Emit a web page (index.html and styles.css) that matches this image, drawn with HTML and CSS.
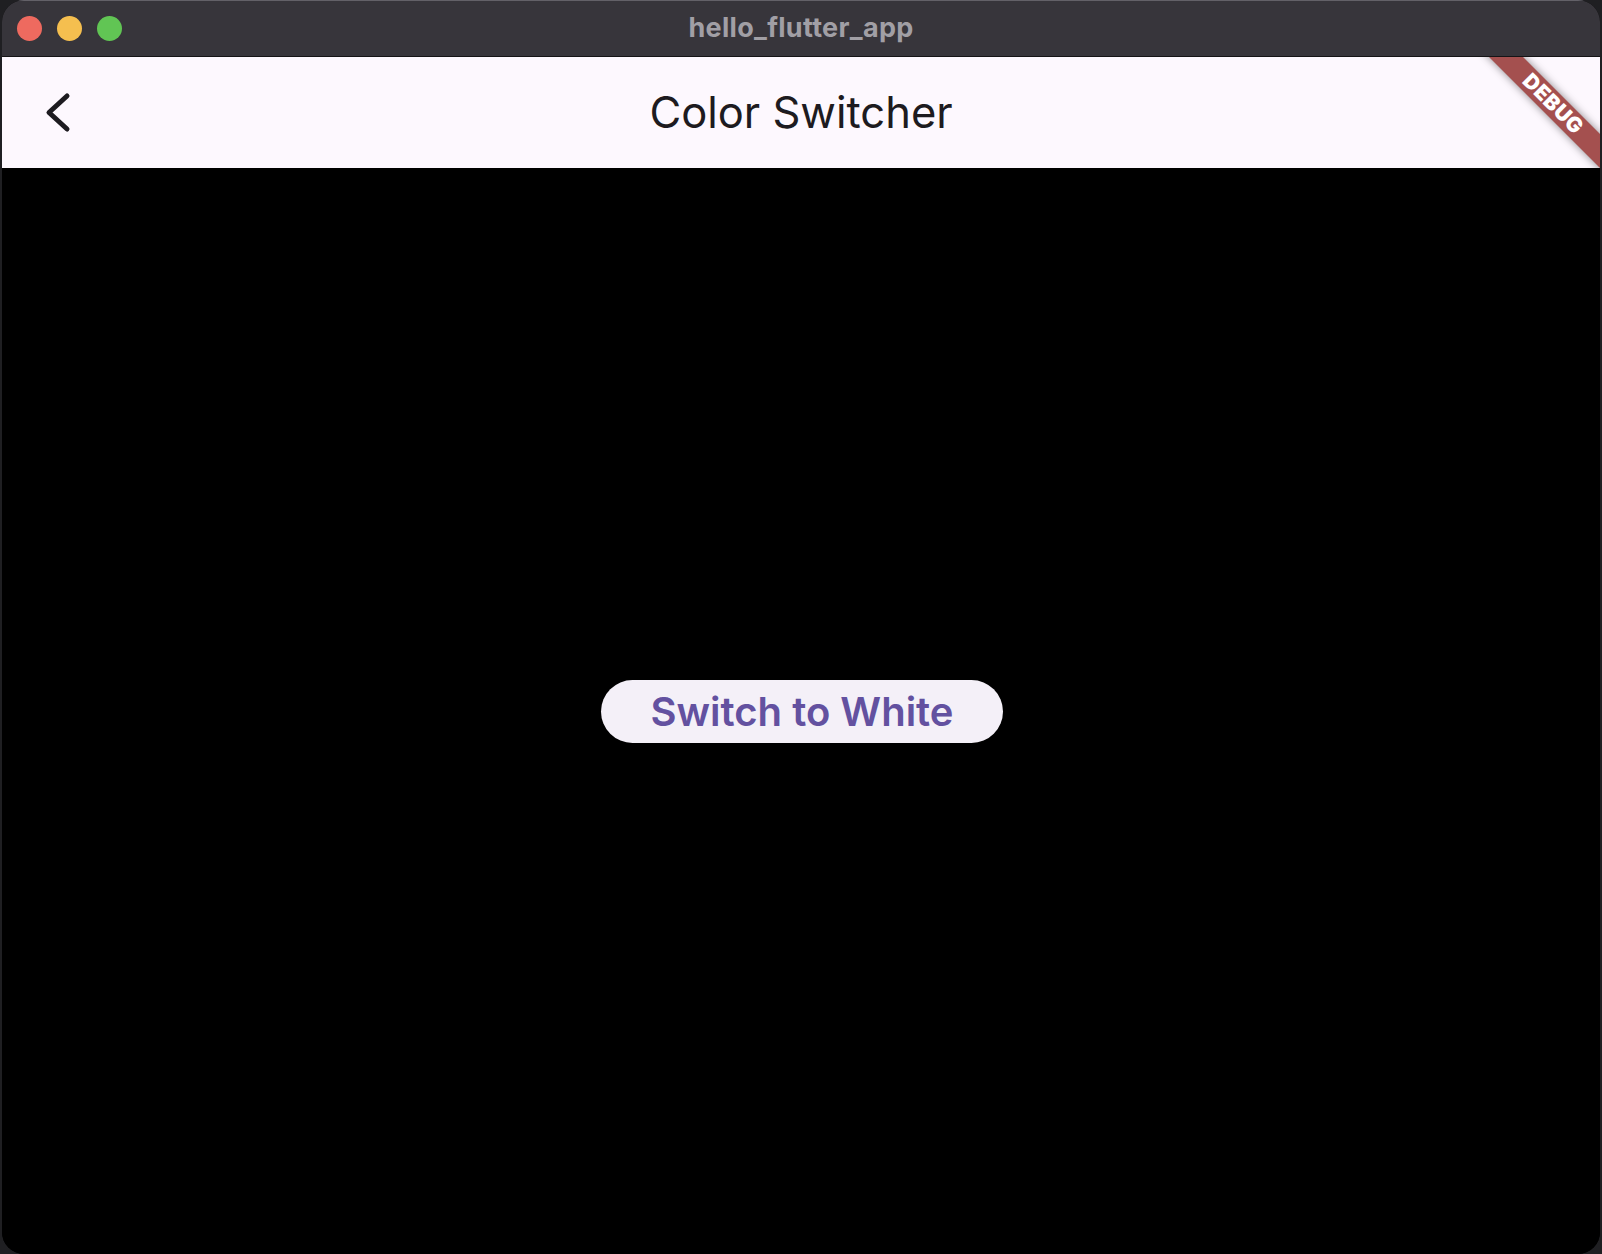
FILE: index.html
```html
<!DOCTYPE html>
<html>
<head>
<meta charset="utf-8">
<title>hello_flutter_app</title>
<link rel="stylesheet" href="styles.css">
</head>
<body>
<div class="window">
  <div class="titlebar">
    <div class="lights">
      <span class="light red"></span>
      <span class="light yellow"></span>
      <span class="light green"></span>
    </div>
    <div class="wintitle">hello_flutter_app</div>
    <div class="lights-spacer"></div>
  </div>
  <div class="app">
    <div class="appbar">
      <div class="leading">
        <svg class="back" width="30" height="44" viewBox="0 0 30 44">
          <polyline points="24,6 6,22.5 24,39" fill="none" stroke="#1d1b20" stroke-width="5" stroke-linecap="round" stroke-linejoin="round"/>
        </svg>
      </div>
      <div class="title">Color Switcher</div>
      <div class="trailing"></div>
    </div>
    <div class="content">
      <button class="switch">Switch to White</button>
    </div>
    <div class="banner">DEBUG</div>
  </div>
</div>
</body>
</html>
```

FILE: styles.css
```css
html, body {
  margin: 0;
  padding: 0;
}
body {
  background: #1f1f22;
  width: 1602px;
  height: 1254px;
  overflow: hidden;
}
.window {
  margin-left: 2px;
  width: 1598px;
  height: 1254px;
  border-radius: 22px;
  overflow: hidden;
  display: flex;
  flex-direction: column;
  background: #000;
}
.titlebar {
  height: 55px;
  flex: none;
  background: #37353b;
  border-top: 1px solid #636168;
  border-bottom: 1px solid #151416;
  display: flex;
  align-items: center;
}
.lights {
  width: 200px;
  display: flex;
  gap: 15px;
  padding-left: 15px;
  box-sizing: border-box;
}
.lights-spacer {
  width: 200px;
}
.light {
  width: 25px;
  height: 25px;
  border-radius: 50%;
  display: block;
}
.red { background: #ee6a5f; }
.yellow { background: #f5bf4f; }
.green { background: #61c554; }
.wintitle {
  flex: 1;
  text-align: center;
  font-family: Inter, "Liberation Sans", sans-serif;
  font-weight: 700;
  font-size: 27px;
  letter-spacing: 0.3px;
  color: #a19fa5;
  margin-top: -3px;
}
.app {
  position: relative;
  flex: 1;
  display: flex;
  flex-direction: column;
  overflow: hidden;
}
.appbar {
  height: 111px;
  flex: none;
  background: #fdf8fe;
  display: flex;
  align-items: center;
}
.leading, .trailing {
  width: 120px;
  flex: none;
}
.back {
  display: block;
  margin-left: 41px;
  margin-top: -1px;
}
.title {
  flex: 1;
  text-align: center;
  font-family: Inter, "Liberation Sans", sans-serif;
  font-size: 43.5px;
  font-weight: 400;
  color: #1d1b20;
  margin-top: -2px;
}
.content {
  flex: 1;
  background: #000;
  display: flex;
  align-items: center;
  justify-content: center;
}
.switch {
  height: 63px;
  padding: 0 50px;
  border: none;
  border-radius: 32px;
  background: #f4f0f8;
  color: #6351a0;
  font-family: Inter, "Liberation Sans", sans-serif;
  font-size: 40px;
  font-weight: 600;
  margin-left: 2px;
  margin-top: 1px;
}
.banner {
  position: absolute;
  top: 35px;
  right: -53px;
  width: 200px;
  height: 24px;
  line-height: 24px;
  transform: rotate(45deg);
  background: #a4504f;
  color: #fff;
  text-align: center;
  font-family: Inter, "Liberation Sans", sans-serif;
  font-weight: 900;
  font-size: 21px;
  letter-spacing: 0.5px;
  box-shadow: 0 0 8px rgba(0,0,0,0.45);
}
```
